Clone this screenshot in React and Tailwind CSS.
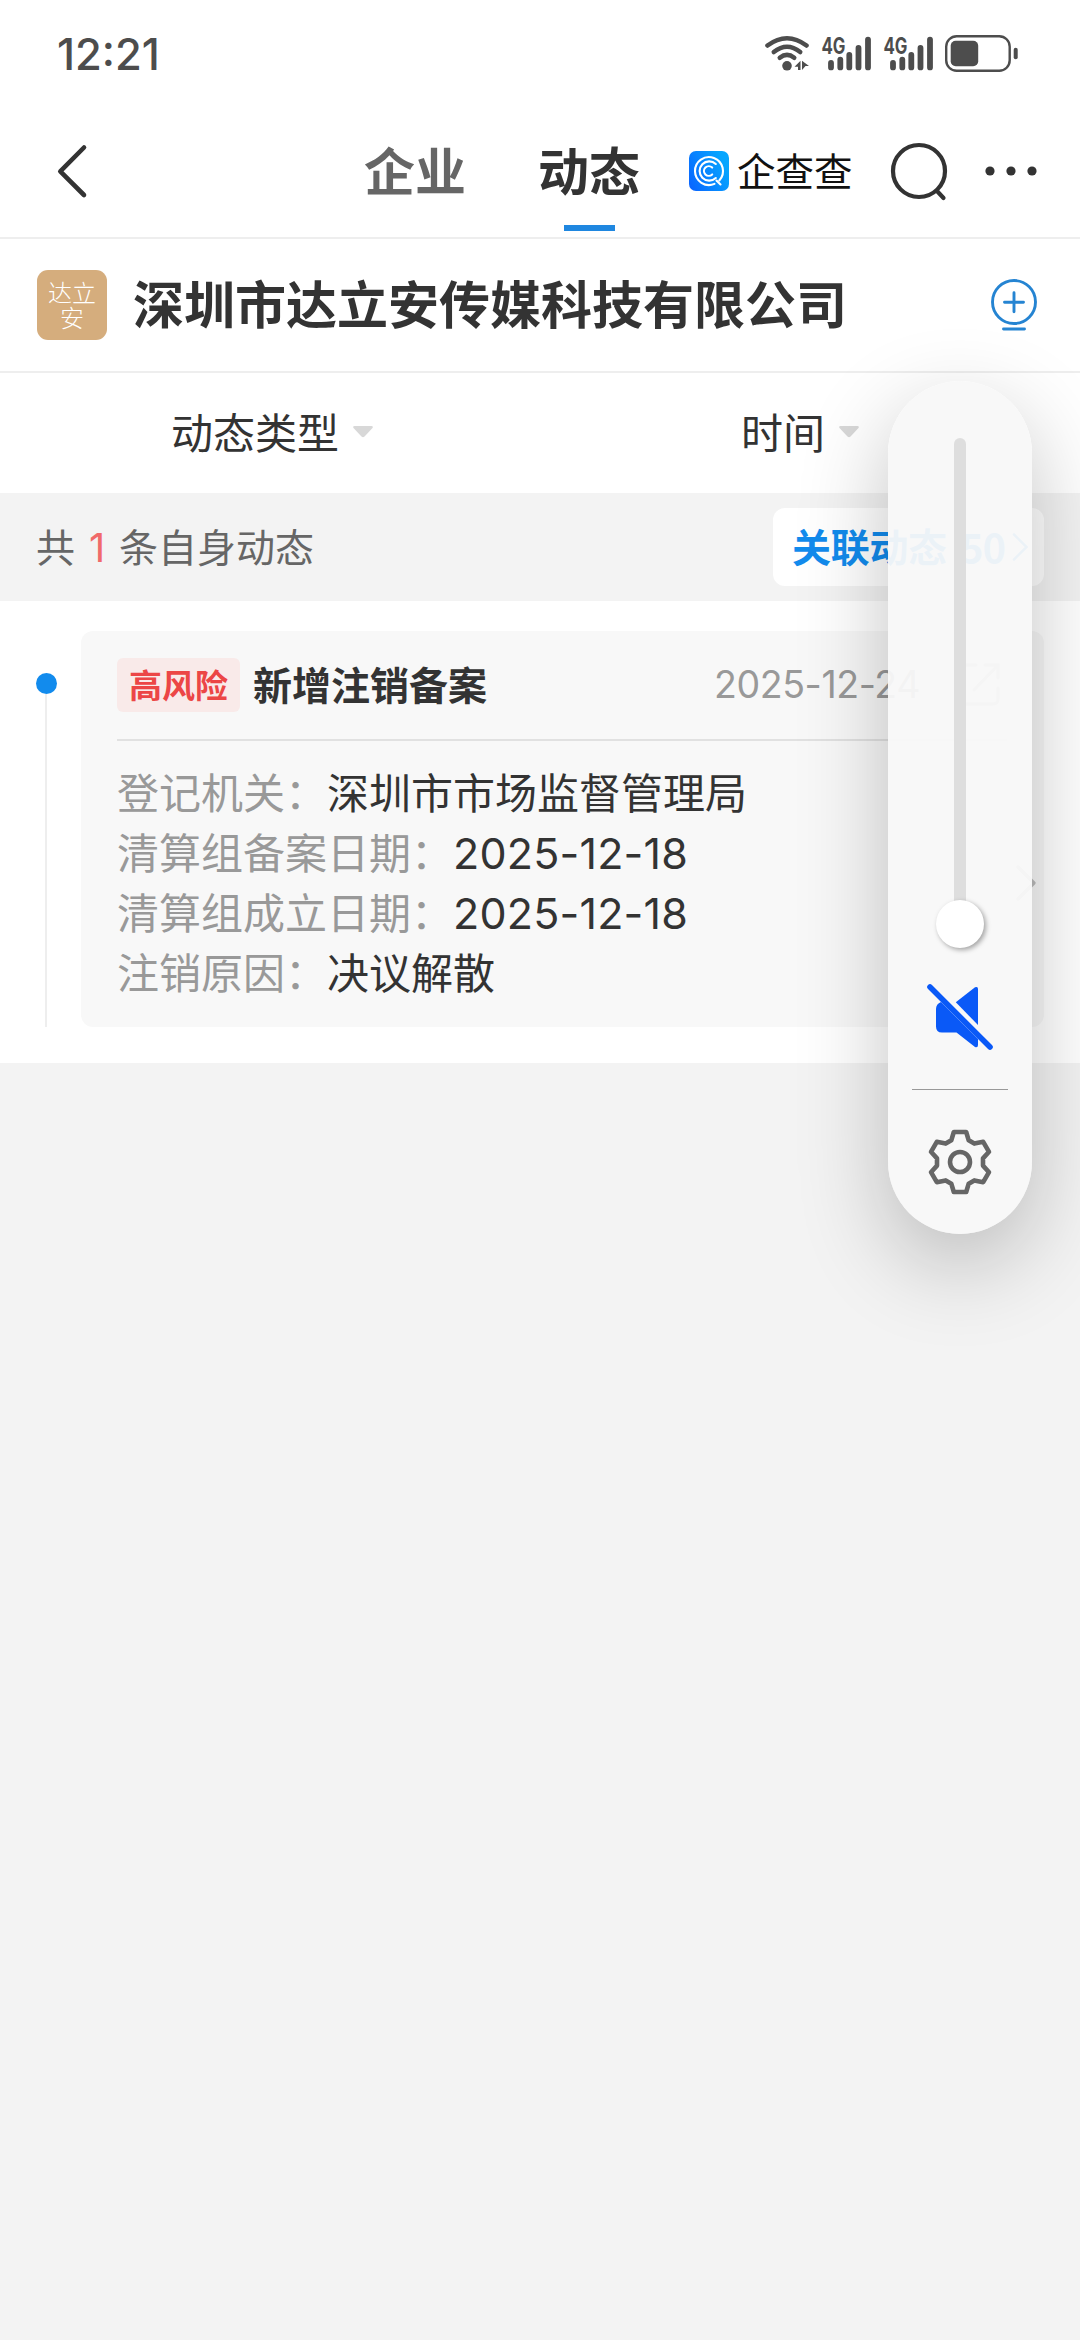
import React from 'react';

const rows = [
  { label: '登记机关：', value: '深圳市市场监督管理局' },
  { label: '清算组备案日期：', value: '2025-12-18', numeric: true },
  { label: '清算组成立日期：', value: '2025-12-18', numeric: true },
  { label: '注销原因：', value: '决议解散' },
];

function Signal() {
  return (
    <svg className="h-[38px] w-[62px] shrink-0" viewBox="0 0 62 38" fill="none">
      <text x="0.5" y="20" fontFamily="Inter, sans-serif" fontWeight="700" fontSize="22.5" fill="#4d4d4d" textLength="24" lengthAdjust="spacingAndGlyphs">4G</text>
      <g stroke="#4d4d4d" strokeWidth="5.800" strokeLinecap="round">
        <path d="M10 28.900v4.500M19.300 25.600v7.800M28.300 20.900v12.500M37.500 13.900v19.500M47 5.600v27.800" />
      </g>
    </svg>
  );
}

function StatusBar() {
  return (
    <div className="flex h-[108px] items-start justify-between pl-[57px]">
      <div className="mt-[30px] font-['Inter'] text-[43.5px] leading-[48px] font-medium tracking-[0px] text-[#4d4d4d]">12:21</div>
      <div className="mt-[34px] flex w-[316px] items-start">
        <svg className="mr-[11px] h-[38px] w-[46px] shrink-0" viewBox="0 0 46 38" fill="none" stroke="#4d4d4d" strokeWidth="4.600" strokeLinecap="round">
          <path d="M3.500 11.500Q23-3 42.500 11.500" />
          <path d="M9.800 18Q23 7.500 36.200 18" />
          <path d="M15.800 23.800Q23 18 30.200 23.800" />
          <circle cx="23" cy="31.800" r="4.800" fill="#4d4d4d" stroke="none" />
          <path d="M30.500 32.800l6-6v9.200h-2.500v-3.200zM38 26.800l7 5.200h-3.500l-3.500 4z" fill="#4d4d4d" stroke="none" />
        </svg>
        <Signal />
        <Signal />
        <svg className="-mt-px -ml-[2px] h-[40px] w-[76px] shrink-0" viewBox="0 0 76 40" fill="none">
          <rect x="3.200" y="3.200" width="63.500" height="34.600" rx="10.500" stroke="#4d4d4d" strokeWidth="2.400" />
          <rect x="7.700" y="7.800" width="27.500" height="25.400" rx="5" fill="#4d4d4d" />
          <rect x="70.700" y="14.700" width="4" height="11.500" rx="2" fill="#4d4d4d" />
        </svg>
      </div>
    </div>
  );
}

function BrandMark() {
  return (
    <svg className="h-[40px] w-[40px]" viewBox="0 0 40 40" fill="none">
      <defs>
        <linearGradient id="brand" x1="0" y1="40" x2="40" y2="20" gradientUnits="userSpaceOnUse">
          <stop stopColor="#0a62ff" />
          <stop offset="1" stopColor="#06a6ff" />
        </linearGradient>
      </defs>
      <rect width="40" height="40" rx="7" fill="url(#brand)" />
      <g stroke="#fff" strokeWidth="2.100" strokeLinecap="round">
        <path d="M25.500 32.900A14 14 0 1 1 30.300 29.500" />
        <path d="M26.800 27A9.600 9.600 0 1 1 26.800 13" />
        <path d="M23.200 23.400A4.800 4.800 0 1 1 23.200 16.600" />
        <path d="M27.500 29.500l4 4" />
      </g>
    </svg>
  );
}

function Header() {
  return (
    <div className="flex h-[131px] items-start border-b-2 border-[#eeeeee]">
      <svg className="mt-[35px] ml-[55px] h-[56px] w-[34px] shrink-0" viewBox="0 0 34 56" fill="none" stroke="#333" strokeWidth="4.600" strokeLinecap="round" strokeLinejoin="round">
        <path d="M29 4.500L5.300 28.300 29 52" />
      </svg>
      <div className="mt-[31px] ml-[275px] text-[51px] leading-[60px] font-bold whitespace-nowrap text-[#666666]">企业</div>
      <div className="mt-[31px] ml-[72px] flex flex-col items-center">
        <div className="text-[51px] leading-[60px] font-bold whitespace-nowrap text-[#333333]">动态</div>
        <div className="mt-[26px] h-[6px] w-[51px] bg-[#1f87e0]" />
      </div>
      <div className="mt-[43px] ml-[49px]">
        <BrandMark />
      </div>
      <div className="mt-[37px] ml-[8px] w-[116px] text-[38.500px] leading-[48px] whitespace-nowrap text-[#111111]">企查查</div>
      <svg className="mt-[33px] ml-[36px] h-[62px] w-[62px] shrink-0" viewBox="0 0 62 62" fill="none" stroke="#333" strokeWidth="4.200" strokeLinecap="round">
        <circle cx="30" cy="30" r="26" />
        <path d="M48 50l6.500 7" />
      </svg>
      <svg className="mt-[55px] ml-[32px] h-[16px] w-[56px] shrink-0" viewBox="0 0 56 16" fill="#333">
        <circle cx="7" cy="8" r="4.600" />
        <circle cx="28" cy="8" r="4.600" />
        <circle cx="49" cy="8" r="4.600" />
      </svg>
    </div>
  );
}

function Company() {
  return (
    <div className="flex h-[134px] items-start border-b-2 border-[#eeeeee] pl-[37px]">
      <div className="mt-[31px] flex h-[70px] w-[70px] flex-col items-center rounded-[11px] bg-[#d5ad7d] pt-[9px] text-center text-[24px] leading-[25px] font-light text-white">
        <span>达立</span>
        <span>安</span>
      </div>
      <div className="mt-[31px] ml-[26px] w-[720px] text-[51px] leading-[64px] font-bold whitespace-nowrap text-[#333333]">深圳市达立安传媒科技有限公司</div>
      <svg className="mt-[38px] ml-[136px] h-[56px] w-[50px] shrink-0" viewBox="0 0 50 56" fill="none" stroke="#2584d2" strokeWidth="2.900" strokeLinecap="round">
        <circle cx="25" cy="25" r="21.500" />
        <path d="M15.500 25.300h19M25 15.800v19M14.500 52h21" />
      </svg>
    </div>
  );
}

function Caret() {
  return (
    <svg className="h-[12px] w-[20px]" viewBox="0 0 20 12" fill="#d8d8d8">
      <path d="M1.500 0h17q2 .3 1 2l-8 8.500q-1.500 1.300-3 0L.500 2q-1-1.700 1-2z" />
    </svg>
  );
}

function Filters() {
  return (
    <div className="grid h-[120px] grid-cols-2 pb-[2px] text-[42px] leading-[60px] text-[#333333]">
      <div className="flex items-center pl-[171px]">
        <span className="w-[182px] pb-[3px]">动态类型</span>
        <Caret />
      </div>
      <div className="flex items-center pl-[201px]">
        <span className="w-[98px] pb-[3px]">时间</span>
        <Caret />
      </div>
    </div>
  );
}

function CountBar() {
  return (
    <div className="flex h-[108px] items-center justify-between bg-[#f3f3f3] pr-[36px] pl-[36px]">
      <div className="flex items-center pb-[4px] text-[39px] leading-[56px] text-[#666666]">
        <span>共</span>
        <span className="w-[44px] pt-[5px] text-center font-['Inter'] text-[40px] text-[#f06a6a]">1</span>
        <span>条自身动态</span>
      </div>
      <div className="flex h-[78px] w-[271px] items-center rounded-[12px] bg-white pl-[19px] text-[39px] leading-[56px] font-bold text-[#128bed]">
        <span className="w-[168px] pb-[4px] tracking-[-0.3px] whitespace-nowrap">关联动态</span>
        <span className="w-[52px] pb-[2px] text-[40px] tracking-[-1px]">50</span>
        <svg className="h-[30px] w-[18px]" viewBox="0 0 18 30" fill="none" stroke="#128bed" strokeWidth="2.600" strokeLinecap="round">
          <path d="M2 2.500l12.500 12.500L2 27.500" />
        </svg>
      </div>
    </div>
  );
}

function EventCard() {
  return (
    <div className="flex h-[462px] bg-white pt-[30px] pr-[36px] pb-[36px] pl-[36px]">
      <div className="flex w-[45px] shrink-0 flex-col">
        <div className="mt-[42px] h-[21px] w-[21px] shrink-0 rounded-full bg-[#128bed]" />
        <div className="ml-[9px] w-[2px] grow bg-[#eeeeee]" />
      </div>
      <div className="flex grow rounded-[12px] bg-[#f8f8f8] pl-[36px]">
        <div className="w-[890px] shrink-0">
          <div className="flex h-[110px] items-center border-b-2 border-[#e1e1e1]">
            <div className="flex h-[54px] w-[123px] items-center justify-center rounded-[6px] bg-[#f9eae9] pb-[3px] text-[33px] leading-[40px] font-bold text-[#ec4646]">高风险</div>
            <div className="ml-[13px] w-[461px] pb-[4px] text-[39px] leading-[56px] font-bold whitespace-nowrap text-[#333333]">新增注销备案</div>
            <div className="w-[242px] font-['Inter'] text-[37.500px] leading-[56px] tracking-[-0.400px] whitespace-nowrap text-[#999999]">2025-12-24</div>
            <svg className="h-[46px] w-[46px]" viewBox="0 0 46 46" fill="none" stroke="#bbb" strokeWidth="3" strokeLinecap="round">
              <path d="M20 3H8Q3 3 3 8v29q0 5 5 5h29q5 0 5-5V26M29 3h13v13M42 3L18 28" />
            </svg>
          </div>
          <div className="mt-[20px] text-[42px] leading-[60px]">
            {rows.map((row) => (
              <div key={row.label} className="flex h-[60px] items-center whitespace-nowrap">
                <span className="text-[#999999]">{row.label}</span>
                {row.numeric ? (
                  <span className="pt-[4px] font-['Inter'] text-[43px] tracking-[0.200px] text-[#333333]">{row.value}</span>
                ) : (
                  <span className="text-[#333333]">{row.value}</span>
                )}
              </div>
            ))}
          </div>
        </div>
        <svg className="mt-[233px] ml-[8px] h-[38px] w-[22px] shrink-0" viewBox="0 0 22 38" fill="none" stroke="#bbb" strokeWidth="3.200" strokeLinecap="round" strokeLinejoin="round">
          <path d="M3 3l16 16L3 35" />
        </svg>
      </div>
    </div>
  );
}

function VolumePanel() {
  return (
    <div className="absolute top-[381px] left-[888px] flex h-[853px] w-[144px] flex-col items-center rounded-[72px] bg-[#f8f8f8]/95 pt-[57px] shadow-[0_30px_90px_rgba(0,0,0,0.24)]">
      <div className="h-[464px] w-[12px] shrink-0 rounded-t-full bg-[#dedede]" />
      <div className="mt-[-2px] h-[48px] w-[48px] shrink-0 rounded-full bg-white shadow-[2px_2px_5px_rgba(0,0,0,0.35)]" />
      <svg className="mt-[34px] h-[72px] w-[72px] shrink-0" viewBox="0 0 72 72" fill="#0a59f7">
        <path d="M31.800 20.300L51 5.300Q54 4 54 7v36z" />
        <path d="M17 20L54 57v6q0 3-3 2L32.500 50.500H18q-6 0-6-6V27q0-5 5-7z" />
        <path d="M6 5L66 65" fill="none" stroke="#0a59f7" strokeWidth="5.600" strokeLinecap="round" />
      </svg>
      <div className="mt-[35px] h-px w-[96px] shrink-0 bg-[#999999]" />
      <svg className="mt-[37px] h-[70px] w-[70px] shrink-0" viewBox="0 0 70 70" fill="none" stroke="#666" strokeWidth="4.600" strokeLinejoin="round">
        <path d="M28.800 5h12.400l2.500 8.300 5.600 3.300 8.900-1.800 5.800 10-6 6.600v7.200l6 6.600-5.800 10-8.900-1.800-5.600 3.300-2.500 8.300H28.800l-2.500-8.300-5.600-3.300-8.900 1.800-5.800-10 6-6.600v-7.200l-6-6.600 5.800-10 8.900 1.800 5.600-3.300z" />
        <circle cx="35" cy="35" r="10" />
      </svg>
    </div>
  );
}

export default function App() {
  return (
    <div className="relative h-[2340px] w-[1080px] overflow-hidden bg-[#f3f3f3] font-['Noto_Sans_CJK_SC',sans-serif]">
      <div className="bg-white">
        <StatusBar />
        <Header />
        <Company />
        <Filters />
      </div>
      <CountBar />
      <EventCard />
      <VolumePanel />
    </div>
  );
}
